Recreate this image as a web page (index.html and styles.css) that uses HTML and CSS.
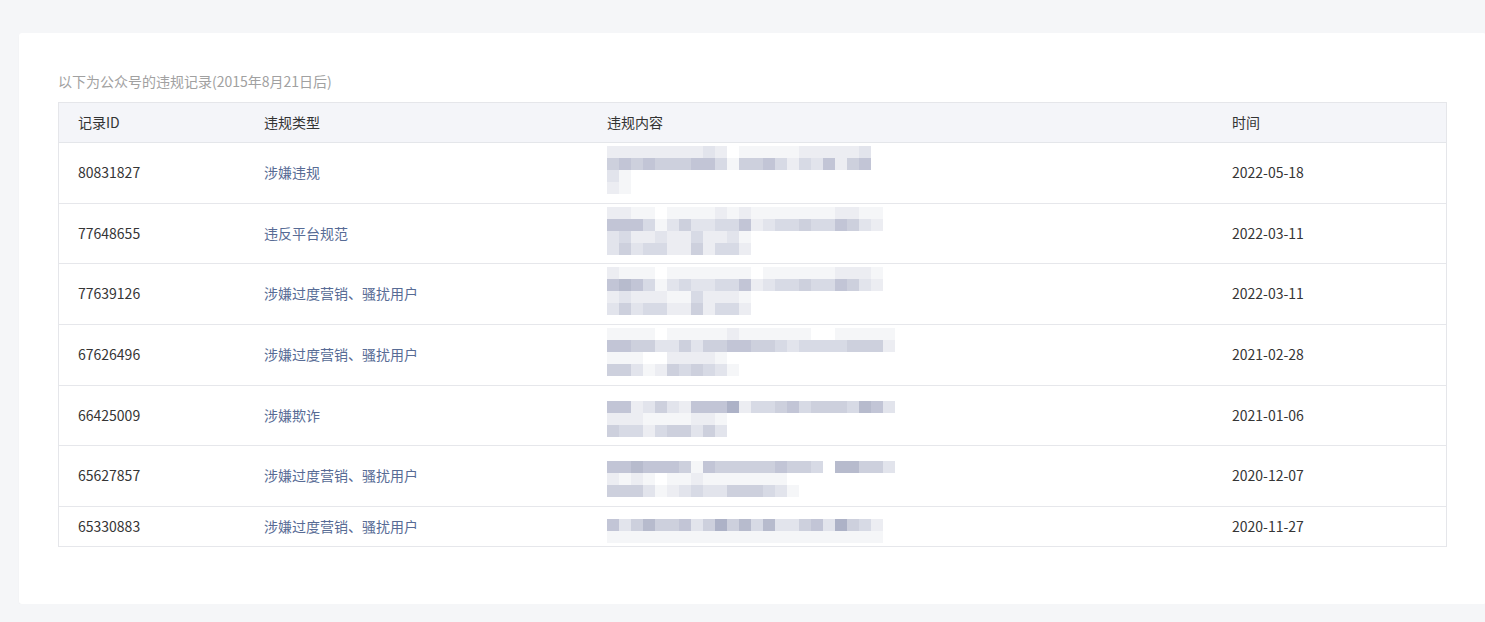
FILE: index.html
```html
<!DOCTYPE html>
<html lang="zh-CN">
<head>
<meta charset="utf-8">
<title>违规记录</title>
<link rel="stylesheet" href="styles.css">
<script src="script.js" defer></script>
</head>
<body>
<div class="page">
  <div class="card">
    <p class="caption">以下为公众号的违规记录(2015年8月21日后)</p>
    <div class="table">
      <div class="row head">
        <div class="cell first">记录ID</div>
        <div class="cell">违规类型</div>
        <div class="cell">违规内容</div>
        <div class="cell">时间</div>
      </div>
      <div class="row r61">
        <div class="cell first">80831827</div>
        <div class="cell type">涉嫌违规</div>
        <div class="cell content"><div class="mosaic" data-m="2222222232011111222223|5656555664155642436256|31|21"></div></div>
        <div class="cell date">2022-05-18</div>
      </div>
      <div class="row r60">
        <div class="cell first">77648655</div>
        <div class="cell type">违反平台规范</div>
        <div class="cell content"><div class="mosaic" data-m="22110111121211111112211|66641353344623445446532|342232242231|353442252442"></div></div>
        <div class="cell date">2022-03-11</div>
      </div>
      <div class="row r61">
        <div class="cell first">77639126</div>
        <div class="cell type">涉嫌过度营销、骚扰用户</div>
        <div class="cell content"><div class="mosaic" data-m="21110111111101111112221|67641343344623445446532|232221142221|353442252442"></div></div>
        <div class="cell date">2022-03-11</div>
      </div>
      <div class="row r61">
        <div class="cell first">67626496</div>
        <div class="cell type">涉嫌过度营销、骚扰用户</div>
        <div class="cell content"><div class="mosaic" data-m="111101111121111110011111|665533535566554344445552|1110022221|55312545431"></div></div>
        <div class="cell date">2021-02-28</div>
      </div>
      <div class="row r60">
        <div class="cell first">66425009</div>
        <div class="cell type">涉嫌欺诈</div>
        <div class="cell content"><div class="mosaic" data-m="0|662353266682445645554763|2221111221|5442455353"></div></div>
        <div class="cell date">2021-01-06</div>
      </div>
      <div class="row r61">
        <div class="cell first">65627857</div>
        <div class="cell type">涉嫌过度营销、骚扰用户</div>
        <div class="cell content"><div class="mosaic" data-m="0|667666516555556554077553|212101121111111|5553123433555431"></div></div>
        <div class="cell date">2020-12-07</div>
      </div>
      <div class="row r40">
        <div class="cell first">65330883</div>
        <div class="cell type">涉嫌过度营销、骚扰用户</div>
        <div class="cell content last"><div class="mosaic" data-m="0|63575563585747335638542|11111111111111111111111"></div></div>
        <div class="cell date">2020-11-27</div>
      </div>
    </div>
  </div>
</div>
</body>
</html>
```

FILE: styles.css
```css
html, body {
  margin: 0;
  padding: 0;
  background: #f5f6f8;
  overflow: hidden;
}
body {
  font-family: "Noto Sans CJK SC", "Noto Sans", sans-serif;
  font-size: 14px;
  color: #353535;
}
.page {
  padding: 33px 0 0 19px;
}
.card {
  box-sizing: border-box;
  width: 1467px;
  height: 571px;
  background: #fff;
  border-radius: 3px;
  padding: 38px 39px 0 39px;
  box-shadow: 0 1px 2px rgba(0, 0, 0, 0.03);
}
.caption {
  margin: 0 0 11px 0;
  line-height: 20px;
  height: 20px;
  font-size: 14px;
  color: #a1a1a1;
}
.table {
  border: 1px solid #e5e6ea;
  border-bottom: none;
}
.row {
  display: grid;
  grid-template-columns: 185px 343px 625px 1fr;
  box-sizing: border-box;
  border-bottom: 1px solid #e6e7eb;
  align-items: center;
}
.row.head {
  height: 40px;
  background: #f4f5f9;
  color: #333;
  border-bottom-color: #e4e6ea;
}
.row.r61 { height: 61px; }
.row.r60 { height: 60px; }
.row.r40 { height: 40px; }
.cell {
  padding-left: 20px;
  padding-bottom: 2px;
  line-height: 20px;
  white-space: nowrap;
}
.cell.first {
  padding-left: 19px;
}
.type {
  color: #576b95;
}
.content {
  align-self: start;
  padding-top: 3px;
  padding-bottom: 0;
  height: 100%;
  box-sizing: border-box;
}
.content.last {
  padding-top: 0;
}
.mosaic {
  height: 0;
  overflow: visible;
}
.mosaic svg {
  display: block;
}
```

FILE: script.js
```javascript
(function () {
  var palette = {
    '0': null,
    '1': '#f5f6f8',
    '2': '#ecedf2',
    '3': '#e2e4ec',
    '4': '#d7dae5',
    '5': '#cdd0dd',
    '6': '#c2c5d6',
    '7': '#b7bbcd',
    '8': '#adb2c7'
  };
  var NS = 'http://www.w3.org/2000/svg';
  var S = 12;
  document.querySelectorAll('.mosaic').forEach(function (el) {
    var lines = el.getAttribute('data-m').split('|');
    var w = 0;
    lines.forEach(function (l) { if (l.length > w) w = l.length; });
    var svg = document.createElementNS(NS, 'svg');
    svg.setAttribute('width', w * S);
    svg.setAttribute('height', lines.length * S);
    svg.setAttribute('shape-rendering', 'crispEdges');
    lines.forEach(function (l, y) {
      for (var x = 0; x < l.length; x++) {
        var c = palette[l[x]];
        if (!c) continue;
        var r = document.createElementNS(NS, 'rect');
        r.setAttribute('x', x * S);
        r.setAttribute('y', y * S);
        r.setAttribute('width', S);
        r.setAttribute('height', S);
        r.setAttribute('fill', c);
        svg.appendChild(r);
      }
    });
    el.appendChild(svg);
  });
})();
```
